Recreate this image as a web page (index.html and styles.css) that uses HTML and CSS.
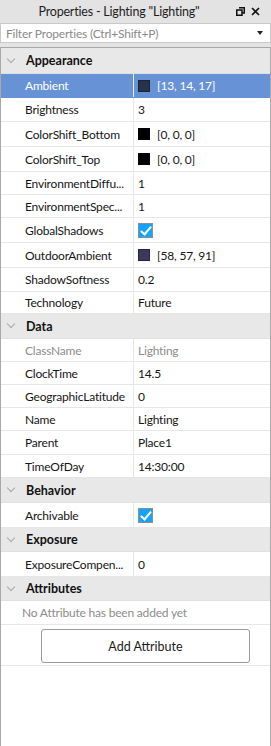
FILE: index.html
```html
<html>
	<head>
		<title>Properties - Lighting</title>
		<link rel="stylesheet" href="styles.css">
	</head>
	<body>
		<div class="titlebar">
			<span class="title">Properties - Lighting "Lighting"</span>
			<span class="tools">
				<svg width="9" height="9" viewBox="0 0 9 9"><path d="M3 0.75H8.25V6H6.75M0.75 3H6V8.25H0.75Z" fill="none" stroke="#111" stroke-width="1.5"/></svg>
				<svg width="9" height="9" viewBox="0 0 9 9"><path d="M1 1L8 8M8 1L1 8" stroke="#111" stroke-width="1.6"/></svg>
			</span>
		</div>
		<div class="filter">
			<span class="placeholder">Filter Properties (Ctrl+Shift+P)</span>
			<span class="caret"></span>
		</div>
		<div class="panel">
			<div class="group">
				<div class="header h26"><span class="chev"></span>Appearance</div>
				<div class="row r24 selected"><span class="name">Ambient</span><span class="value"><i class="swatch" style="background: #27334b"></i>[13, 14, 17]</span></div>
				<div class="row r24"><span class="name">Brightness</span><span class="value">3</span></div>
				<div class="row r25"><span class="name">ColorShift_Bottom</span><span class="value"><i class="swatch" style="background: #000"></i>[0, 0, 0]</span></div>
				<div class="row r25"><span class="name">ColorShift_Top</span><span class="value"><i class="swatch" style="background: #000"></i>[0, 0, 0]</span></div>
				<div class="row"><span class="name">EnvironmentDiffu...</span><span class="value">1</span></div>
				<div class="row"><span class="name">EnvironmentSpec...</span><span class="value">1</span></div>
				<div class="row r25"><span class="name">GlobalShadows</span><span class="value"><i class="check"></i></span></div>
				<div class="row r25"><span class="name">OutdoorAmbient</span><span class="value"><i class="swatch" style="background: #3a395b"></i>[58, 57, 91]</span></div>
				<div class="row r24"><span class="name">ShadowSoftness</span><span class="value">0.2</span></div>
				<div class="row r22"><span class="name">Technology</span><span class="value">Future</span></div>
			</div>
			<div class="group">
				<div class="header"><span class="chev"></span>Data</div>
				<div class="row muted"><span class="name">ClassName</span><span class="value">Lighting</span></div>
				<div class="row"><span class="name">ClockTime</span><span class="value">14.5</span></div>
				<div class="row"><span class="name">GeographicLatitude</span><span class="value">0</span></div>
				<div class="row"><span class="name">Name</span><span class="value">Lighting</span></div>
				<div class="row r24"><span class="name">Parent</span><span class="value">Place1</span></div>
				<div class="row"><span class="name">TimeOfDay</span><span class="value">14:30:00</span></div>
			</div>
			<div class="group">
				<div class="header"><span class="chev"></span>Behavior</div>
				<div class="row r25"><span class="name">Archivable</span><span class="value"><i class="check"></i></span></div>
			</div>
			<div class="group">
				<div class="header h24"><span class="chev"></span>Exposure</div>
				<div class="row r25"><span class="name">ExposureCompen...</span><span class="value">0</span></div>
			</div>
			<div class="group">
				<div class="header h24"><span class="chev"></span>Attributes</div>
				<div class="empty">No Attribute has been added yet</div>
				<div class="actions">
					<button class="add">Add Attribute</button>
				</div>
			</div>
		</div>
	</body>
</html>
```

FILE: styles.css
```css
body {
	margin: 0px;
	background: #e3e3e3;
	font-family: "Lato", sans-serif;
	font-size: 12px;
	letter-spacing: -0.2px;
	color: #151515;
	width: 271px;
	height: 746px;
	display: flex;
	flex-direction: column;
	overflow: hidden;
}

.titlebar {
	height: 23px;
	display: flex;
	align-items: center;
	flex-shrink: 0;
}

.title {
	flex: 1;
	text-align: center;
	font-size: 12.5px;
	color: #1e1e1e;
	padding-left: 2px;
}

.tools {
	width: 35px;
	display: flex;
	gap: 6px;
	align-items: center;
}

.tools svg {
	display: block;
}

.filter {
	height: 18px;
	background: #fff;
	border: 1px solid #c9c9c9;
	display: flex;
	align-items: center;
	padding: 0 5px;
	flex-shrink: 0;
}

.placeholder {
	flex: 1;
	color: #8a8a8a;
}

.caret {
	width: 0;
	height: 0;
	border-left: 3px solid transparent;
	border-right: 3px solid transparent;
	border-top: 4px solid #222;
	margin-right: 2px;
}

.panel {
	margin-top: 4px;
	flex: 1;
	background: #fff;
	border: 1px solid #a9a9a9;
	border-bottom: none;
}

.header {
	height: 25px;
	background: #e8e8e8;
	display: flex;
	align-items: center;
	font-weight: bold;
	font-size: 12.5px;
	letter-spacing: 0;
	color: #111;
	border-bottom: 1px solid #e0e0e0;
	box-sizing: border-box;
}

.header.h24 { height: 24px; }
.header.h26 { height: 26px; }

.chev {
	width: 5px;
	height: 5px;
	border-right: 1.5px solid #a8a8a8;
	border-bottom: 1.5px solid #a8a8a8;
	transform: rotate(45deg);
	margin: -4px 12px 0 7px;
}

.row {
	height: 23px;
	display: flex;
	border-bottom: 1px solid #e6e6e6;
	box-sizing: border-box;
}

.row.r22 { height: 22px; }
.row.r24 { height: 24px; }
.row.r25 { height: 25px; }

.row .name {
	width: 133px;
	padding-left: 24px;
	box-sizing: border-box;
	border-right: 1px solid #e6e6e6;
	display: flex;
	align-items: center;
	white-space: nowrap;
	overflow: hidden;
}

.row .value {
	flex: 1;
	padding-left: 4px;
	display: flex;
	align-items: center;
}

.row.selected {
	background: #6792d6;
	color: #fff;
	border-bottom-color: #6792d6;
}

.row.selected .name {
	border-right-color: #e9eef8;
}

.row.muted {
	color: #8c8c8c;
}

.swatch {
	width: 12px;
	height: 12px;
	box-sizing: border-box;
	border: 1px solid rgba(0, 0, 0, 0.3);
	margin-right: 7px;
}

.check {
	width: 15px;
	height: 15px;
	box-sizing: border-box;
	border: 1px solid #8e8e8e;
	background: #13a4ff;
	position: relative;
}

.check:after {
	content: "";
	position: absolute;
	left: 4px;
	top: 0px;
	width: 4px;
	height: 9px;
	border-right: 2px solid #fff;
	border-bottom: 2px solid #fff;
	transform: rotate(40deg);
}

.empty {
	height: 23px;
	display: flex;
	align-items: center;
	padding-left: 21px;
	color: #8c8c8c;
	border-bottom: 1px solid #e6e6e6;
}

.actions {
	padding: 4px 0 2px 40px;
	display: flex;
	border-bottom: 1px solid #e6e6e6;
}

.add {
	width: 209px;
	height: 34px;
	background: #fff;
	border: 1px solid #999;
	border-radius: 3px;
	font-family: "Lato", sans-serif;
	font-size: 12.5px;
	color: #1b1b1b;
}
```
